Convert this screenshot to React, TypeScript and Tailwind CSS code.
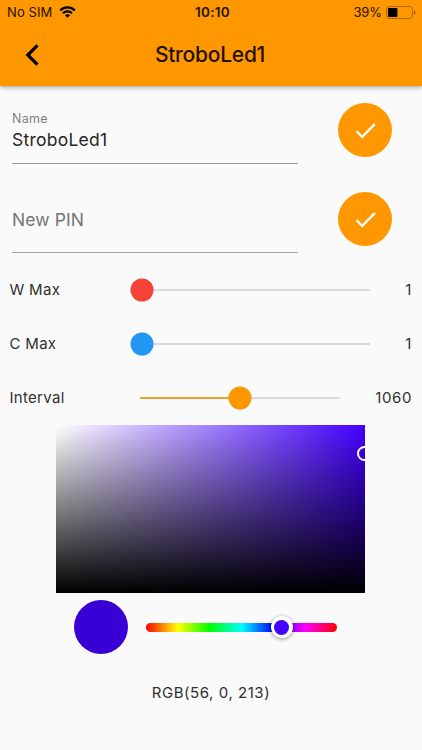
type SliderRowProps = {
  label: string;
  value: number;
  percent: number;
  thumb: string;
  track: string;
};

const sliders: SliderRowProps[] = [
  { label: "W Max", value: 1, percent: 0, thumb: "bg-[#f44336]", track: "ml-[142px] w-[228px]" },
  { label: "C Max", value: 1, percent: 0, thumb: "bg-[#2196f3]", track: "ml-[142px] w-[228px]" },
  { label: "Interval", value: 1060, percent: 50, thumb: "bg-[#ff9800]", track: "ml-[140px] w-[200px]" },
];

function StatusBar() {
  return (
    <div className="grid h-6 grid-cols-3 items-center pl-[7px] pr-[6px] text-[13px] leading-6">
      <div className="flex items-center gap-[7px]">
        <span className="tracking-[0.1px]">No SIM</span>
        <svg width="17" height="12" viewBox="0 0 17 12" fill="none" stroke="#000" strokeWidth="2.1">
          <path d="M1.2 4.4C5.2.4 11.8.4 15.8 4.4" />
          <path d="M3.9 7.2c2.6-2.5 6.6-2.5 9.2 0" />
          <path d="M8.5 11.8 5.9 9.2c1.5-1.3 3.7-1.3 5.2 0z" fill="#000" stroke="none" />
        </svg>
      </div>
      <span className="pl-0.5 text-center text-[13.5px] font-semibold tracking-[0.3px]">10:10</span>
      <div className="flex items-center justify-end gap-1">
        <span className="tracking-[-0.1px]">39%</span>
        <svg width="30" height="13" viewBox="0 0 30 13" fill="none">
          <rect x="0.5" y="0.5" width="26" height="12" rx="3" stroke="#a96500" />
          <rect x="2" y="2" width="9.4" height="9" rx="1" fill="#000" />
          <path d="M28 4.2c1.7.8 1.7 3.8 0 4.6z" fill="#8a5200" />
        </svg>
      </div>
    </div>
  );
}

function AppBar() {
  return (
    <header className="relative h-[86px] bg-[#ff9800] text-[#1f1200] shadow-[0_1px_5px_rgba(0,0,0,0.4)]">
      <StatusBar />
      <div className="grid h-[62px] grid-cols-[56px_1fr_56px] items-center">
        <button className="pl-[25px]" aria-label="Back">
          <svg width="14" height="22" viewBox="0 0 14 22" fill="none" stroke="#000" strokeWidth="3.2">
            <path d="M12.4 1.4 2.8 11l9.6 9.6" />
          </svg>
        </button>
        <h1 className="pr-0.5 text-center text-[21px] font-medium tracking-[-0.25px]">StroboLed1</h1>
      </div>
    </header>
  );
}

function ConfirmButton() {
  return (
    <button className="flex size-[54px] items-center justify-center rounded-full bg-[#ff9800]" aria-label="Confirm">
      <svg width="27" height="27" viewBox="0 0 24 24" fill="#fff">
        <path d="M9 16.17 4.83 12l-1.42 1.41L9 19 21 7l-1.41-1.41z" />
      </svg>
    </button>
  );
}

function SliderRow({ label, value, percent, thumb, track }: SliderRowProps) {
  return (
    <div className="grid h-[54px] items-center text-[15px] text-[#303030]">
      <div className="col-start-1 row-start-1 flex justify-between pl-[9.5px] pr-[10px]">
        <span className="tracking-[0.3px]">{label}</span>
        <span className="tracking-[0.6px]">{value}</span>
      </div>
      <div className={`relative col-start-1 row-start-1 h-[2px] rounded-full bg-[#dadada] ${track}`}>
        <div className="h-full rounded-full bg-[#eda12f]" style={{ width: `${percent}%` }} />
        <div
          className={`absolute top-1/2 size-[23px] -translate-x-1/2 -translate-y-1/2 rounded-full ${thumb}`}
          style={{ left: `${percent}%` }}
        />
      </div>
    </div>
  );
}

function ColorPicker() {
  return (
    <section>
      {/* Saturation / value */}
      <div className="relative ml-[56.4px] h-[168.4px] w-[309px] overflow-hidden bg-[linear-gradient(to_top,#000,transparent),linear-gradient(to_right,#fff,#4300ff)]">
        <div className="absolute -right-[7px] top-[20.5px] size-[15px] rounded-full border-2 border-white" />
      </div>

      {/* Preview and hue */}
      <div className="ml-[74.3px] mt-[6.8px] flex items-center gap-[17.7px]">
        <div className="size-[54px] rounded-full bg-[#3800d5]" />
        <div className="relative h-[9px] w-[191px] rounded-full bg-[linear-gradient(to_right,#f00,#ff0,#0f0,#0ff,#00f,#f0f,#f00)]">
          <div className="absolute left-[136px] top-1/2 flex size-[22px] -translate-x-1/2 -translate-y-1/2 items-center justify-center rounded-full bg-white shadow-[0_1px_4px_rgba(0,0,0,0.4)]">
            <div className="size-[15px] rounded-full bg-[#4300ff]" />
          </div>
        </div>
      </div>

      <p className="mt-[27px] text-center text-[15px] leading-6 tracking-[0.55px] text-[#303030]">RGB(56, 0, 213)</p>
    </section>
  );
}

export default function App() {
  return (
    <div className="h-[750px] w-[422px] overflow-hidden bg-[#fafafa] font-[Inter,sans-serif]">
      <AppBar />
      <main>
        <form className="pl-3 pr-[30px] pt-[17px]">
          <div className="flex h-[89px] justify-between">
            <div className="h-[61px] w-[286px] border-b border-[#999] pt-2">
              <div className="text-[12.5px] leading-4 tracking-[0.3px] text-[#808080]">Name</div>
              <div className="text-[17.5px] leading-[25px] tracking-[0.25px] text-[#262626]">StroboLed1</div>
            </div>
            <ConfirmButton />
          </div>
          <div className="flex h-[71px] justify-between">
            <div className="h-[61px] w-[286px] border-b border-[#a6a6a6] pt-[15px] text-[17.5px] leading-[25px] tracking-[0.1px] text-[#757575]">
              New PIN
            </div>
            <ConfirmButton />
          </div>
        </form>

        {sliders.map((s) => (
          <SliderRow key={s.label} {...s} />
        ))}

        <ColorPicker />
      </main>
    </div>
  );
}
